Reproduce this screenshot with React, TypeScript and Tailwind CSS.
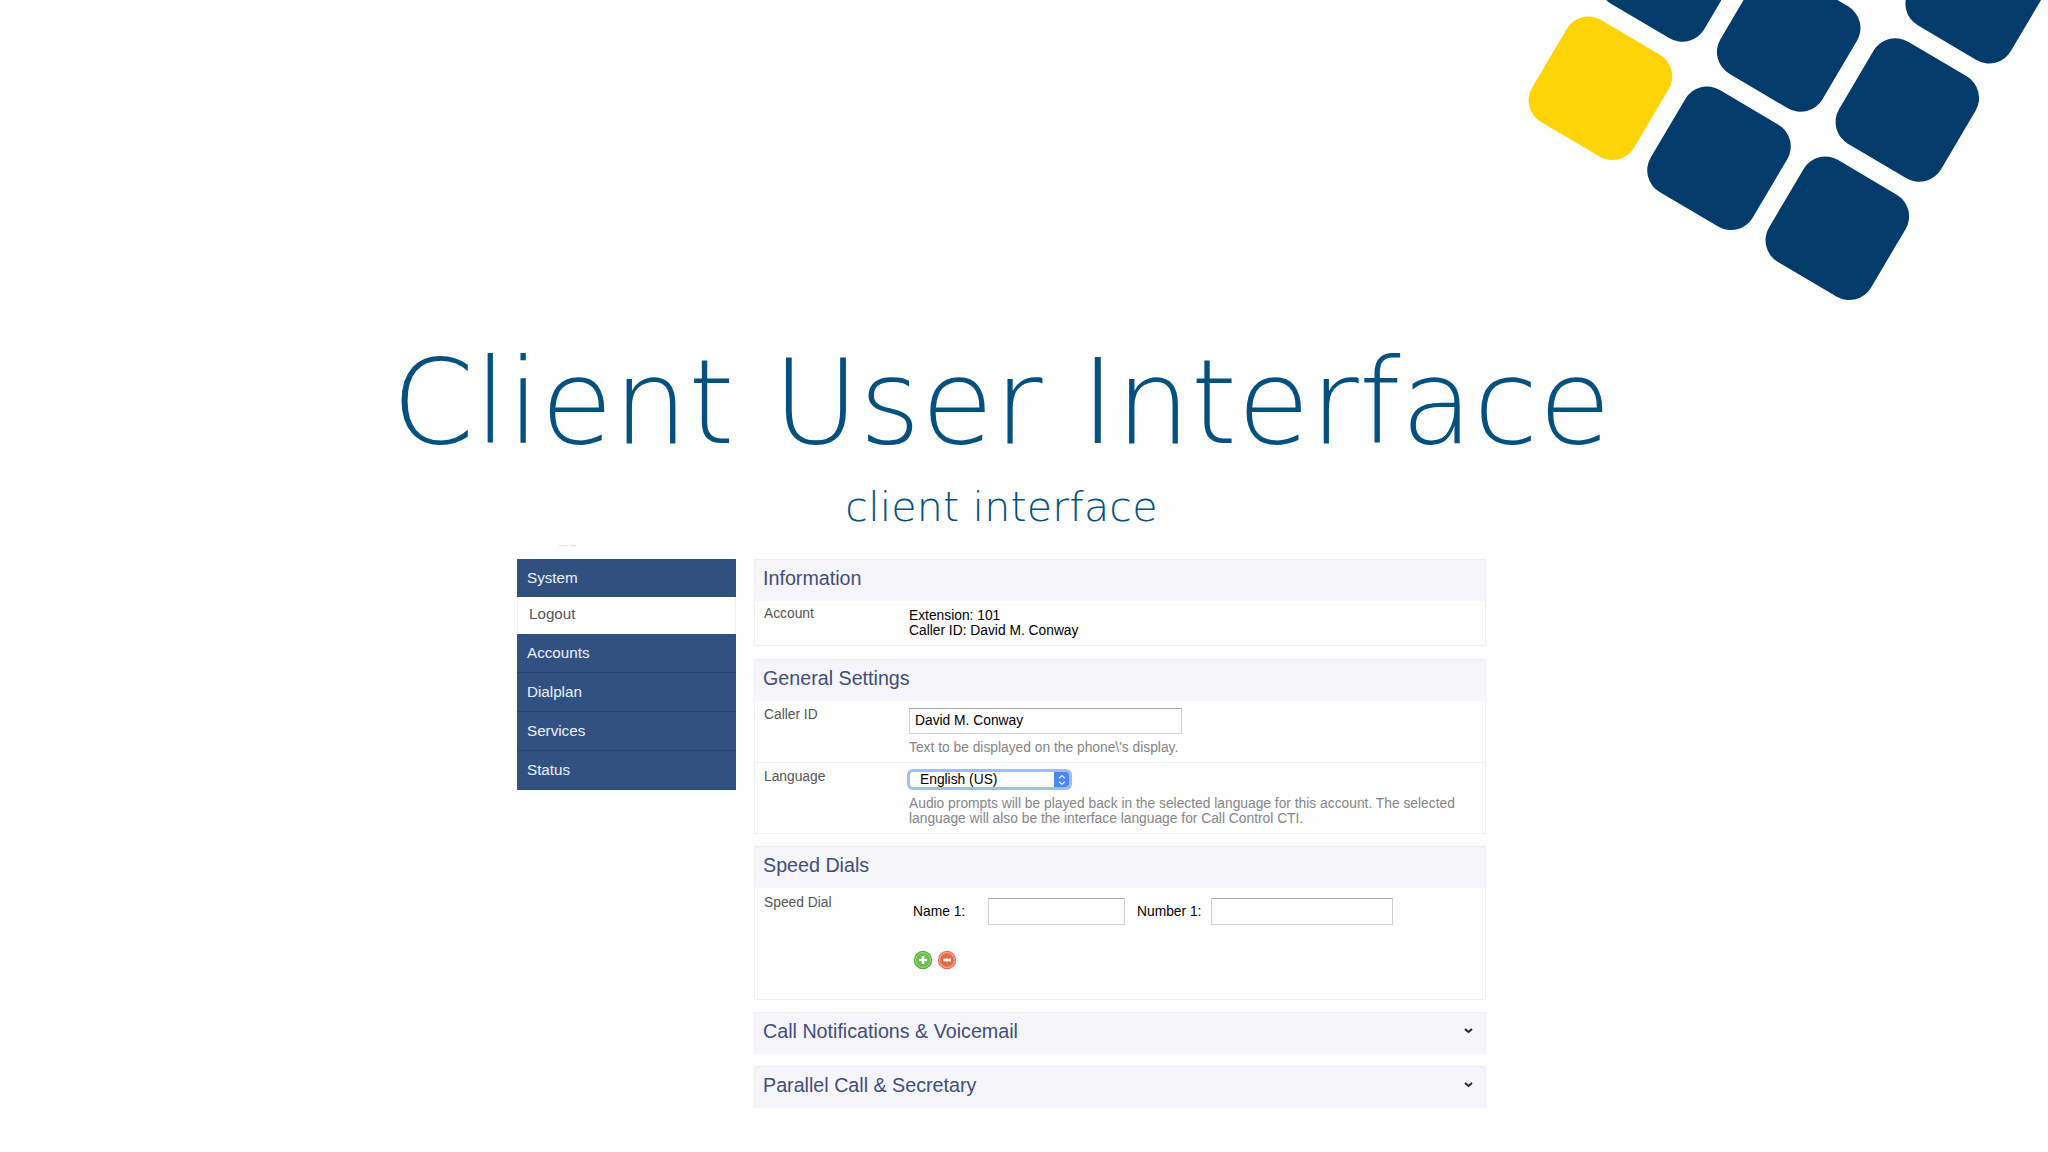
import type { ReactNode } from 'react';

const TILES = [
  { x: 1600.4, y: 88.3, fill: '#ffd406' },
  { x: 1719, y: 158.3, fill: '#033b6b' },
  { x: 1837.3, y: 228.3, fill: '#033b6b' },
  { x: 1670.4, y: -30, fill: '#033b6b' },
  { x: 1788.7, y: 40, fill: '#033b6b' },
  { x: 1907.3, y: 110, fill: '#033b6b' },
  { x: 1977.2, y: -8.3, fill: '#033b6b' },
];

const MENU = ['Accounts', 'Dialplan', 'Services', 'Status'];

function Tiles() {
  return (
    <svg className="absolute top-0 left-0" width="2048" height="320" viewBox="0 0 2048 320">
      {TILES.map((tile) => (
        <rect
          key={`${tile.x}-${tile.y}`}
          x={-59.2}
          y={-59.2}
          width={118.4}
          height={118.4}
          rx={25.2}
          fill={tile.fill}
          transform={`translate(${tile.x} ${tile.y}) rotate(30.6)`}
        />
      ))}
    </svg>
  );
}

function Sidebar() {
  return (
    <nav className="mt-px w-[219px] shrink-0 text-[15.2px] text-[#eef2fa]">
      <div className="flex h-[38px] items-center bg-[#30507f] pb-px pl-[10px]">System</div>
      <div className="flex h-[37px] items-center border-x border-[#ececf2] bg-white pb-1 pl-[11px] text-[#555]">
        Logout
      </div>
      {MENU.map((item) => (
        <div
          key={item}
          className="flex h-[39px] items-center border-b border-[#27427a] bg-[#315183] pb-px pl-[10px] last:border-[#315183]"
        >
          {item}
        </div>
      ))}
    </nav>
  );
}

interface PanelProps {
  title: string;
  className: string;
  collapsed?: boolean;
  children?: ReactNode;
}

function Panel({ title, className, collapsed, children }: PanelProps) {
  return (
    <section className={`flex flex-col border border-[#eeedf2] bg-[#fefefe] ${className}`}>
      <h2 className="flex h-[41px] shrink-0 items-center justify-between bg-[#f6f5f9] pr-[12px] pb-[5px] pl-[8px] text-[19.7px] text-[#3f4d7c]">
        {title}
        {collapsed && (
          <svg width="9" height="6" viewBox="0 0 9 6" fill="none" stroke="#222" strokeWidth="2">
            <path d="M1 1l3.5 3L8 1" />
          </svg>
        )}
      </h2>
      {children}
    </section>
  );
}

interface RowProps {
  label: string;
  className: string;
  children: ReactNode;
}

function Row({ label, className, children }: RowProps) {
  return (
    <div className={`flex pl-[9px] ${className}`}>
      <div className="w-[145px] shrink-0 pt-[4px] text-[#555]">{label}</div>
      <div className="text-black">{children}</div>
    </div>
  );
}

function PlusIcon() {
  return (
    <svg width="20" height="20" viewBox="0 0 20 20">
      <circle cx="10" cy="10" r="9.2" fill="#58a83c" />
      <circle cx="10" cy="10" r="7.4" fill="#6cbd4d" stroke="#a5dc8c" strokeWidth="1" />
      <path d="M10 6v8M6 10h8" stroke="#fff" strokeWidth="2.6" />
    </svg>
  );
}

function MinusIcon() {
  return (
    <svg width="20" height="20" viewBox="0 0 20 20">
      <circle cx="10" cy="10" r="9.2" fill="#e0705a" />
      <circle cx="10" cy="10" r="7.4" fill="#e8663f" stroke="#f2a593" strokeWidth="1.2" />
      <path d="M6 10h8" stroke="#fff" strokeWidth="2.8" />
    </svg>
  );
}

export default function App() {
  return (
    <div className="relative h-[1152px] w-[2048px] overflow-hidden bg-[#fefefe]">
      <Tiles />
      <main className="ml-[517px] flex w-[969px] flex-col items-center pt-[342px]">
        <h1 className="h-[120px] font-['DejaVu_Sans',sans-serif] text-[118px] leading-[120px] font-extralight tracking-[0.28px] whitespace-nowrap text-[#04507f]">
          Client User Interface
        </h1>
        <p className="mt-[21px] h-[48px] font-['DejaVu_Sans',sans-serif] text-[41.2px] leading-[48px] font-extralight tracking-[0.15px] whitespace-nowrap text-[#04507f]">
          client interface
        </p>
        <div className="mt-[14px] flex w-full gap-[2px] pl-[42px]">
          <div className="h-px w-[9px] bg-[#e2e2e6]" />
          <div className="h-px w-[6px] bg-[#e2e2e6]" />
        </div>

        <div className="mt-[12px] flex w-full items-start justify-between font-['Liberation_Sans',Arial,sans-serif] text-[13.8px] leading-[15px]">
          <Sidebar />
          <div className="mt-px flex w-[732px] flex-col">
            <Panel title="Information" className="h-[87px]">
              <Row label="Account" className="pt-[1px]">
                <div className="pt-[6px]">
                  Extension: 101
                  <br />
                  Caller ID: David M. Conway
                </div>
              </Row>
            </Panel>

            <Panel title="General Settings" className="mt-[13px] h-[175px]">
              <Row label="Caller ID" className="h-[62px] border-b border-[#eeedf2] pt-[2px]">
                <div className="mt-[5px] flex h-[26px] w-[273px] items-center border border-[#d0d0d6] border-t-[#a9a9b0] bg-white pb-px pl-[5px]">
                  David M. Conway
                </div>
                <p className="mt-[6px] text-[#858585]">Text to be displayed on the phone\'s display.</p>
              </Row>
              <Row label="Language" className="pt-[2px]">
                <div className="mt-[7px] ml-px flex h-[15px] w-[159px] items-center justify-between overflow-hidden rounded-[3px] bg-white pl-[10px] ring-3 ring-[#9dbef8]">
                  English (US)
                  <span className="flex h-full w-[15px] items-center justify-center bg-[#4b86f8]">
                    <svg width="8" height="12" viewBox="0 0 8 12" fill="none" stroke="#dfeaff" strokeWidth="1.4">
                      <path d="M1.2 4.2L4 1.6l2.8 2.6M1.2 7.8L4 10.4l2.8-2.6" />
                    </svg>
                  </span>
                </div>
                <p className="mt-[9px] text-[#858585]">
                  Audio prompts will be played back in the selected language for this account. The selected
                  <br />
                  language will also be the interface language for Call Control CTI.
                </p>
              </Row>
            </Panel>

            <Panel title="Speed Dials" className="mt-[12px] h-[154px]">
              <Row label="Speed Dial" className="pt-[3px]">
                <div className="mt-[7px] flex items-center pl-[4px]">
                  <span className="w-[75px]">Name 1:</span>
                  <span className="h-[27px] w-[137px] border border-[#d0d0d6] border-t-[#a9a9b0] bg-white" />
                  <span className="ml-[12px] w-[74px]">Number 1:</span>
                  <span className="h-[27px] w-[182px] border border-[#d0d0d6] border-t-[#a9a9b0] bg-white" />
                </div>
                <div className="mt-[25px] flex gap-[4px] pl-[4px]">
                  <PlusIcon />
                  <MinusIcon />
                </div>
              </Row>
            </Panel>

            <Panel title="Call Notifications &amp; Voicemail" className="mt-[12px] h-[42px]" collapsed />
            <Panel title="Parallel Call &amp; Secretary" className="mt-[12px] h-[42px]" collapsed />
          </div>
        </div>
      </main>
    </div>
  );
}
